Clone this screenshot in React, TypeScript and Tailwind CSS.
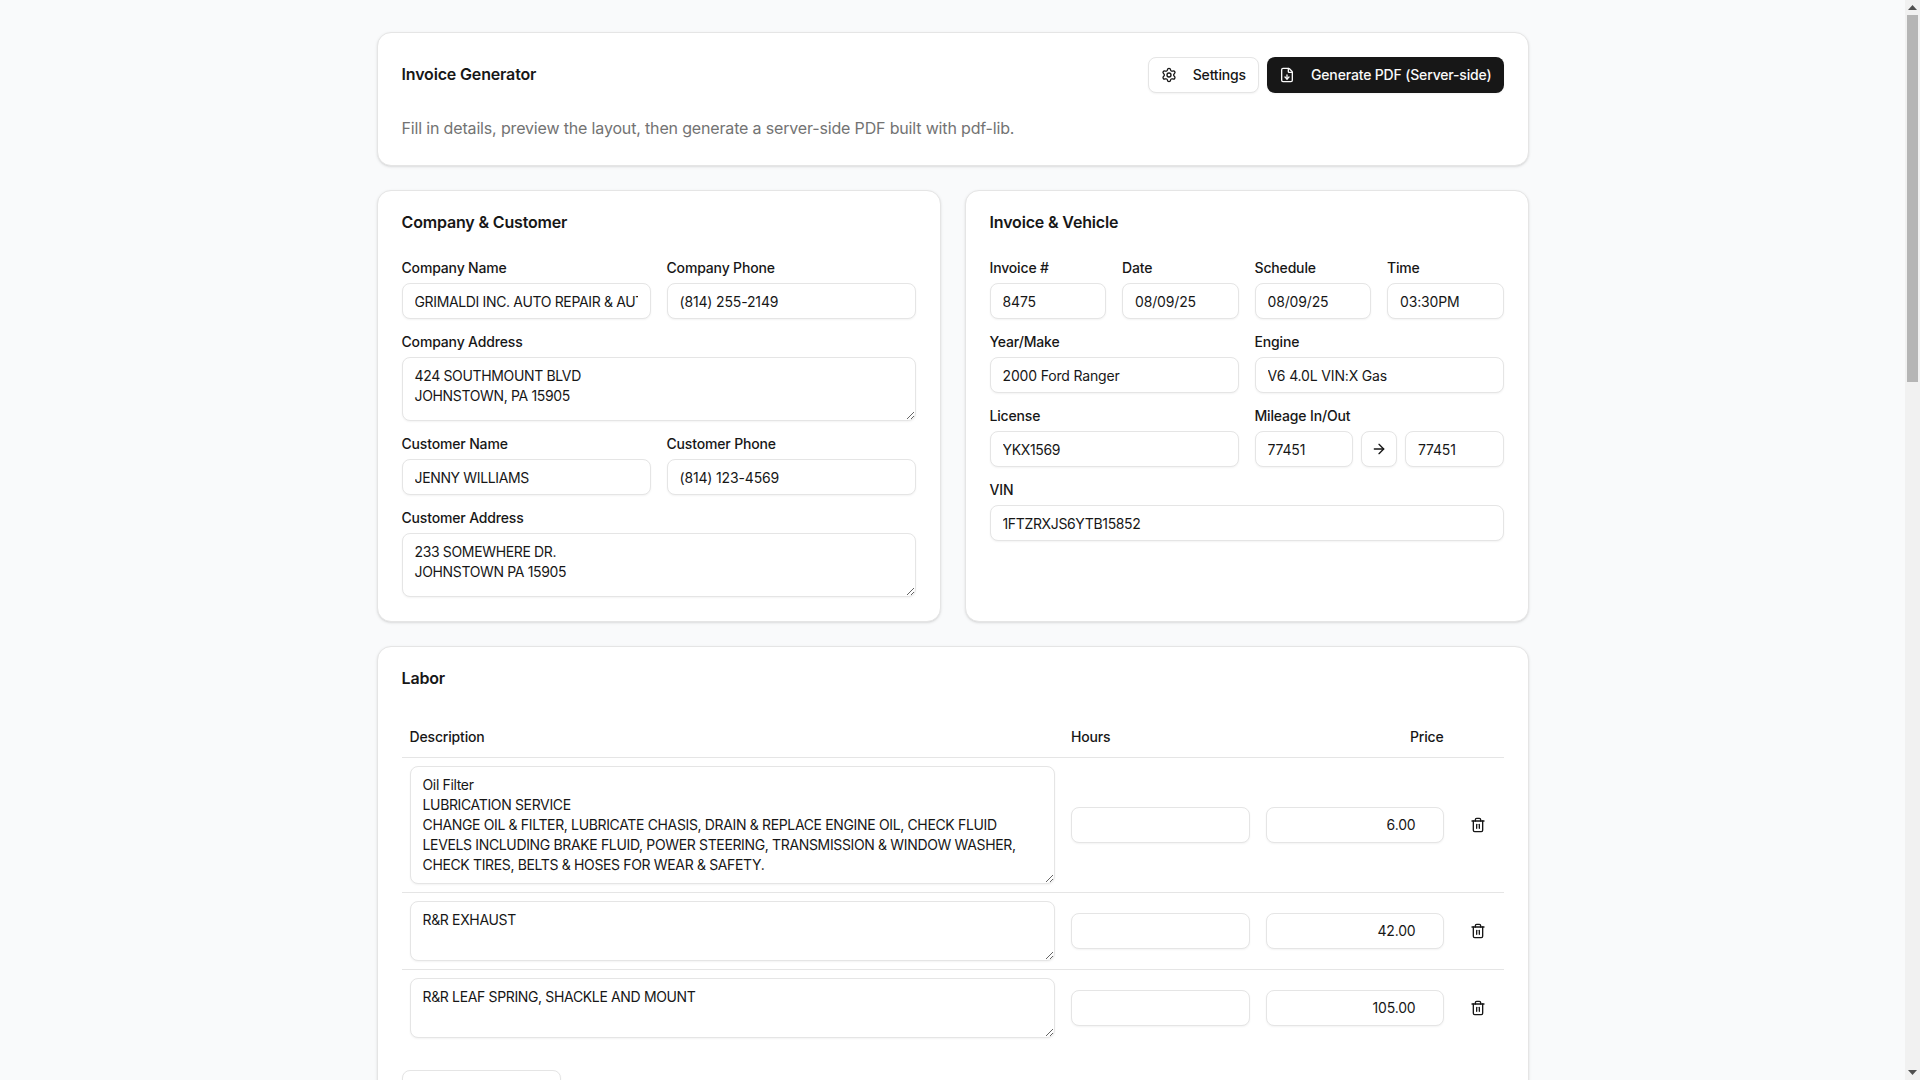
import React from "react";
import { Settings, FileDown, ArrowRight, Trash2, Plus } from "lucide-react";

const inputCls =
  "w-full h-9 min-w-0 rounded-lg border border-[#e5e5e5] bg-white px-3 py-1 text-sm text-[#171717] shadow-xs outline-none";
const areaCls =
  "w-full block rounded-lg border border-[#e5e5e5] bg-white px-3 py-2 text-sm leading-5 text-[#171717] shadow-xs outline-none resize-y";

function Field({ label, children }: { label: string; children: React.ReactNode }) {
  return (
    <div className="flex flex-col gap-2 min-w-0">
      <label className="text-sm font-medium leading-[14px] text-[#171717]">{label}</label>
      {children}
    </div>
  );
}

function TextField({ label, value, caps }: { label: string; value: string; caps?: boolean }) {
  return (
    <Field label={label}>
      <input className={`${inputCls} ${caps ? "tracking-[-0.025em]" : ""}`} defaultValue={value} />
    </Field>
  );
}

function AreaField({ label, value }: { label: string; value: string }) {
  return (
    <Field label={label}>
      <textarea className={`${areaCls} h-16 tracking-[-0.025em]`} defaultValue={value} />
    </Field>
  );
}

function Card({ title, children }: { title: string; children: React.ReactNode }) {
  return (
    <section className="flex flex-col gap-6 rounded-[14px] border border-[#e5e5e5] bg-white p-6 shadow-sm">
      <h2 className="pb-2 text-base font-semibold leading-[14px] text-[#171717]">{title}</h2>
      {children}
    </section>
  );
}

function ScrollBar() {
  return (
    <aside className="fixed top-0 right-0 bottom-0 flex w-[15px] flex-col items-center bg-[#f1f1f1]">
      <div className="flex h-[15px] w-full shrink-0 items-center justify-center">
        <svg width="9" height="5" viewBox="0 0 9 5">
          <polygon points="4.5,0 9,5 0,5" fill="#505050" />
        </svg>
      </div>
      <div className="h-[367px] w-[11px] shrink-0 bg-[#b5b5b5]" />
      <div className="flex-1" />
      <div className="flex h-[15px] w-full shrink-0 items-center justify-center">
        <svg width="9" height="5" viewBox="0 0 9 5">
          <polygon points="0,0 9,0 4.5,5" fill="#505050" />
        </svg>
      </div>
    </aside>
  );
}

const rows = [
  {
    desc: "Oil Filter\nLUBRICATION SERVICE\nCHANGE OIL & FILTER, LUBRICATE CHASIS, DRAIN & REPLACE ENGINE OIL, CHECK FLUID LEVELS INCLUDING BRAKE FLUID, POWER STEERING, TRANSMISSION & WINDOW WASHER, CHECK TIRES, BELTS & HOSES FOR WEAR & SAFETY.",
    price: "6.00",
    h: "h-[118px]",
  },
  { desc: "R&R EXHAUST", price: "42.00", h: "h-[60px]" },
  { desc: "R&R LEAF SPRING, SHACKLE AND MOUNT", price: "105.00", h: "h-[60px]" },
];

export default function App() {
  return (
    <div className="min-h-[3053px] bg-[#f9fafb] py-8 pr-[15px] font-['Inter',sans-serif] tracking-[-0.01em] text-[#171717]">
      <ScrollBar />
      <main className="mx-auto flex w-[1152px] flex-col gap-6">
        <section className="flex flex-col gap-6 rounded-[14px] border border-[#e5e5e5] bg-white p-6 shadow-sm">
          <div className="flex items-center justify-between">
            <h1 className="pb-0.5 text-base font-semibold leading-4">Invoice Generator</h1>
            <div className="flex items-center gap-2">
              <button className="flex h-9 items-center gap-4 rounded-lg border border-[#e5e5e5] bg-white px-3 text-sm font-medium shadow-xs">
                <Settings size={16} />
                Settings
              </button>
              <button className="flex h-9 items-center gap-4 rounded-lg bg-[#171717] px-3 text-sm font-medium text-[#fafafa] shadow-xs">
                <FileDown size={16} />
                Generate PDF (Server-side)
              </button>
            </div>
          </div>
          <p className="pb-px text-base leading-[23px] text-[#737373]">
            Fill in details, preview the layout, then generate a server-side PDF built with pdf-lib.
          </p>
        </section>

        <div className="grid grid-cols-2 gap-6">
          <Card title="Company & Customer">
            <div className="flex flex-col gap-4">
              <div className="grid grid-cols-2 gap-4">
                <TextField caps label="Company Name" value="GRIMALDI INC. AUTO REPAIR & AUTO BODY" />
                <TextField label="Company Phone" value="(814) 255-2149" />
              </div>
              <AreaField label="Company Address" value={"424 SOUTHMOUNT BLVD\nJOHNSTOWN, PA 15905"} />
              <div className="grid grid-cols-2 gap-4">
                <TextField caps label="Customer Name" value="JENNY WILLIAMS" />
                <TextField label="Customer Phone" value="(814) 123-4569" />
              </div>
              <AreaField label="Customer Address" value={"233 SOMEWHERE DR.\nJOHNSTOWN PA 15905"} />
            </div>
          </Card>

          <Card title="Invoice & Vehicle">
            <div className="flex flex-col gap-4">
              <div className="grid grid-cols-4 gap-4">
                <TextField label="Invoice #" value="8475" />
                <TextField label="Date" value="08/09/25" />
                <TextField label="Schedule" value="08/09/25" />
                <TextField label="Time" value="03:30PM" />
              </div>
              <div className="grid grid-cols-2 gap-4">
                <TextField label="Year/Make" value="2000 Ford Ranger" />
                <TextField label="Engine" value="V6 4.0L VIN:X Gas" />
              </div>
              <div className="grid grid-cols-2 gap-4">
                <TextField caps label="License" value="YKX1569" />
                <Field label="Mileage In/Out">
                  <div className="flex items-center gap-2">
                    <input className={inputCls} defaultValue="77451" />
                    <button className="flex size-9 shrink-0 items-center justify-center rounded-lg border border-[#e5e5e5] bg-white shadow-xs">
                      <ArrowRight size={16} />
                    </button>
                    <input className={inputCls} defaultValue="77451" />
                  </div>
                </Field>
              </div>
              <TextField caps label="VIN" value="1FTZRXJS6YTB15852" />
            </div>
          </Card>
        </div>

        <Card title="Labor">
          <div className="flex flex-col items-start gap-6">
            <table className="w-full table-fixed border-collapse text-sm">
              <colgroup>
                <col />
                <col className="w-[195px]" />
                <col className="w-[193.5px]" />
                <col className="w-[52px]" />
              </colgroup>
              <thead>
                <tr className="border-b border-[#e5e5e5]">
                  <th className="h-10 px-2 text-left font-medium">Description</th>
                  <th className="h-10 px-2 text-left font-medium">Hours</th>
                  <th className="h-10 px-2 text-right font-medium">Price</th>
                  <th className="h-10 px-2" />
                </tr>
              </thead>
              <tbody>
                {rows.map((r, i) => (
                  <tr key={i} className="border-b border-[#e5e5e5] last:border-0">
                    <td className="p-2 align-middle">
                      <textarea className={`${areaCls} ${r.h} tracking-[-0.025em]`} defaultValue={r.desc} />
                    </td>
                    <td className="p-2 align-middle">
                      <input className={inputCls} />
                    </td>
                    <td className="p-2 align-middle">
                      <input type="number" step="0.01" className={`${inputCls} text-right`} defaultValue={r.price} />
                    </td>
                    <td className="p-2 align-middle">
                      <button className="flex size-9 items-center justify-center rounded-lg">
                        <Trash2 size={16} />
                      </button>
                    </td>
                  </tr>
                ))}
              </tbody>
            </table>
            <button className="flex h-9 w-[159px] items-center justify-center gap-2 rounded-lg border border-[#e5e5e5] bg-white px-3 text-sm font-medium shadow-xs">
              <Plus size={16} />
              Add Labor Item
            </button>
          </div>
        </Card>
      </main>
    </div>
  );
}
